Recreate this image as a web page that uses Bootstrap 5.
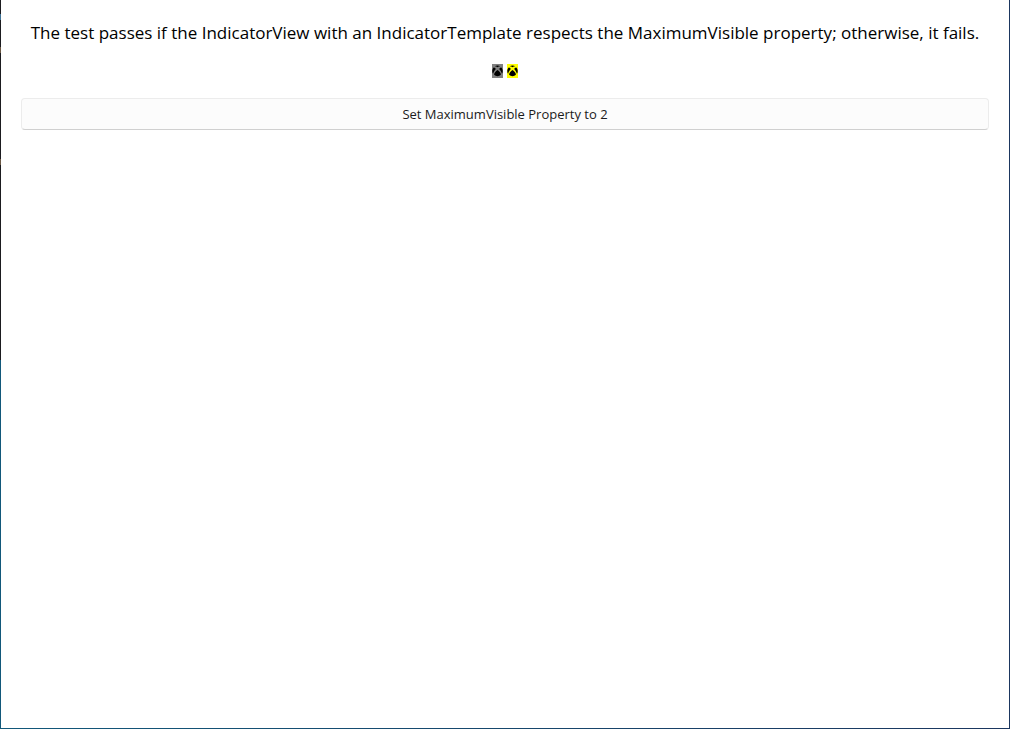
<!DOCTYPE html>
<html lang="en">
<head>
<meta charset="utf-8">
<meta name="viewport" content="width=device-width, initial-scale=1">
<title>IndicatorView MaximumVisible</title>
<link href="https://cdn.jsdelivr.net/npm/bootstrap@5.3.0/dist/css/bootstrap.min.css" rel="stylesheet">
<style>
  body { font-family: "Open Sans", "Noto Sans", sans-serif; color: #000; }
  /* thin desktop-coloured edge on the left, right and bottom of the window */
  .window-frame {
    background:
      linear-gradient(to right, #12587a, #1b365f) bottom / 100% 1px no-repeat,
      linear-gradient(#1b365f, #1b365f) right / 1px 100% no-repeat,
      linear-gradient(#3d7093, #3d7093) 0 14px / 1px 6px no-repeat,
      linear-gradient(#6b5844, #6b5844) 0 47px / 1px 6px no-repeat,
      linear-gradient(#6b5844, #6b5844) 0 159px / 1px 6px no-repeat,
      linear-gradient(to bottom, #1b1b1f 360px, #12587a 360px) left / 1px 100% no-repeat,
      #fff;
    padding: 21px;
    gap: 20px;
  }
  .instructions { font-size: 17px; line-height: 23px; }
  .indicators { gap: 4px; }
  .indicator { width: 11px; height: 14px; padding: 0; border: 0; background: #808080; }
  .indicator.current { background: #ff0; }
  .indicator svg { display: block; width: 11px; height: 14px; }
  .btn-set {
    font-size: 13px; line-height: 20px; padding: 5px 11px;
    color: #1b1b1b; background: #fcfcfc;
    border: 1px solid #ececec; border-bottom-color: #d0d0d0; border-radius: 4px;
  }
</style>
</head>
<body>
<svg class="d-none" aria-hidden="true">
  <symbol id="sphere" viewBox="0 0 11 14">
    <path d="M2.800 2.200C4.200 1.200 6.800 1.200 8.200 2.200C7.200 2.200 6.300 2.600 5.500 3.200C4.700 2.600 3.800 2.200 2.800 2.200Z"/>
    <path d="M1.700 3.600C2.500 3.600 3.200 4.200 3.800 4.900C2.400 6.400 1.400 8.200 1.100 9.800C-.2 8 .1 5.200 1.700 3.600Z"/>
    <path d="M9.300 3.600C8.500 3.600 7.800 4.200 7.200 4.900C8.600 6.400 9.600 8.200 9.900 9.800C11.200 8 10.900 5.200 9.300 3.600Z"/>
    <path d="M5.500 5.900C7.300 7.200 9 9.200 8.900 10.700C7.200 12.600 3.800 12.600 2.100 10.700C2 9.200 3.700 7.200 5.500 5.900Z"/>
  </symbol>
</svg>
<main class="window-frame min-vh-100 d-flex flex-column">
  <p class="instructions text-center mb-0">The test passes if the IndicatorView with an IndicatorTemplate respects the MaximumVisible property; otherwise, it fails.</p>
  <div class="indicators d-flex justify-content-center">
    <button type="button" class="indicator" aria-label="Item 1"><svg><use href="#sphere"/></svg></button>
    <button type="button" class="indicator current" aria-label="Item 2" aria-current="true"><svg><use href="#sphere"/></svg></button>
  </div>
  <button type="button" class="btn btn-set w-100">Set MaximumVisible Property to 2</button>
</main>
<script src="https://cdn.jsdelivr.net/npm/bootstrap@5.3.0/dist/js/bootstrap.bundle.min.js"></script>
</body>
</html>
